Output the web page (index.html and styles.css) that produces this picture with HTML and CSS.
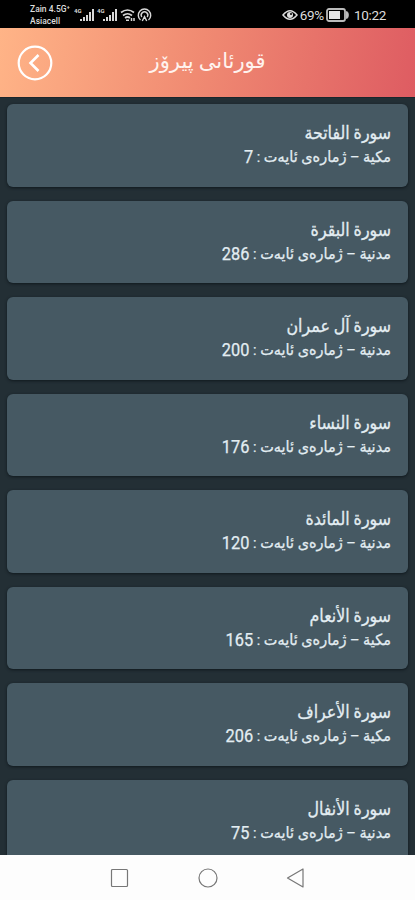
FILE: index.html
```
<!DOCTYPE html>
<html lang="ckb" dir="rtl">
<head>
  <meta charset="utf-8">
  <title>قورئانی پیرۆز</title>
  <link rel="stylesheet" href="styles.css">
</head>
<body>

<div class="status" dir="ltr">
  <div class="carrier"><span>Zain 4.5G⁺</span><span>Asiacell</span></div>
  <svg class="signals" width="80" height="16" viewBox="0 0 80 16">
    <g fill="#d8d8d8">
      <text x="0" y="6" class="net">4G</text>
      <path d="M6 14v-2h2v2zM9 14v-4h2v4zM12 14V8h2v6zM15 14V5h2v9zM18 14V2h2v12z"/>
      <text x="23" y="6" class="net">4G</text>
      <path d="M29 14v-2h2v2zM32 14v-4h2v4zM35 14V8h2v6zM38 14V5h2v9zM41 14V2h2v12z"/>
    </g>
    <g fill="none" stroke="#d8d8d8" stroke-width="1.7">
      <path d="M47 5.500q6.500-5 13 0M49 8.500q4.500-3.500 9 0M51 11q2.500-2 5 0"/>
      <path d="M52 13.200h3M57.500 11v3M60 11v3" stroke-width="1.500"/>
      <path d="M66.500 13a6.200 6.200 0 1 1 8 0M67.800 10a3.300 3.300 0 1 1 5.400 0M68.300 14l2.200-4.500 2.200 4.500" stroke-width="1.400"/>
    </g>
  </svg>
  <svg class="eye" width="16" height="12" viewBox="0 0 16 12">
    <path d="M1 6q7-8.500 14 0q-7 8.500-14 0z" fill="none" stroke="#ddd" stroke-width="1.500"/>
    <circle cx="8" cy="6" r="3" fill="#ddd"/>
    <circle cx="9" cy="5" r="1" fill="#000"/>
  </svg>
  <span class="percent">69%</span>
  <svg class="battery" width="24" height="14" viewBox="0 0 24 14">
    <rect x="1" y="1" width="18" height="12" rx="2" fill="none" stroke="#bbb" stroke-width="1.800"/>
    <rect x="3" y="3" width="11" height="8" fill="#e4e4e4"/>
    <path d="M20.500 3.500q1.800 0 1.800 3.500t-1.800 3.500z" fill="#bbb" stroke="#bbb"/>
  </svg>
  <span class="time">10:22</span>
</div>

<header class="header">
  <svg class="back" width="36" height="36" viewBox="0 0 36 36" fill="none" stroke="#fff">
    <circle cx="18" cy="18" r="16.300" stroke-width="2.200"/>
    <path d="M21.500 10L13.500 18l8 8" stroke-width="2.600"/>
  </svg>
  <h1>قورئانی پیرۆز</h1>
</header>

<main class="list">
  <div class="card">
    <h2>سورة الفاتحة</h2>
    <p>مكية – ژمارەی ئایەت : <b>7</b></p>
  </div>
  <div class="card">
    <h2>سورة البقرة</h2>
    <p>مدنية – ژمارەی ئایەت : <b>286</b></p>
  </div>
  <div class="card">
    <h2>سورة آل عمران</h2>
    <p>مدنية – ژمارەی ئایەت : <b>200</b></p>
  </div>
  <div class="card">
    <h2>سورة النساء</h2>
    <p>مدنية – ژمارەی ئایەت : <b>176</b></p>
  </div>
  <div class="card">
    <h2>سورة المائدة</h2>
    <p>مدنية – ژمارەی ئایەت : <b>120</b></p>
  </div>
  <div class="card">
    <h2>سورة الأنعام</h2>
    <p>مكية – ژمارەی ئایەت : <b>165</b></p>
  </div>
  <div class="card">
    <h2>سورة الأعراف</h2>
    <p>مكية – ژمارەی ئایەت : <b>206</b></p>
  </div>
  <div class="card">
    <h2>سورة الأنفال</h2>
    <p>مدنية – ژمارەی ئایەت : <b>75</b></p>
  </div>
</main>

<nav class="navbar" dir="ltr">
  <svg width="20" height="20" viewBox="0 0 20 20"><rect x="1.500" y="1.500" width="16" height="17" rx="1"/></svg>
  <svg width="20" height="20" viewBox="0 0 20 20"><circle cx="10" cy="10" r="9"/></svg>
  <svg width="20" height="20" viewBox="0 0 20 20"><path d="M17 1v18L1.500 10z" stroke-linejoin="round"/></svg>
</nav>

</body>
</html>
```
FILE: styles.css
```
* {
  margin: 0;
  padding: 0;
  box-sizing: border-box;
}
body {
  display: flex;
  flex-direction: column;
  height: 900px;
  overflow: hidden;
  background: #232f35;
  font-family: Roboto, "DejaVu Sans", sans-serif;
}
.status {
  display: flex;
  flex: none;
  align-items: center;
  height: 28px;
  padding: 1px 29px 0 30px;
  background: #000;
  color: #ddd;
}
.carrier {
  display: flex;
  flex-direction: column;
  width: 44px;
  font-size: 8.5px;
  font-weight: 500;
  line-height: 12px;
  white-space: nowrap;
}
.signals {
  flex: none;
}
.net {
  font-size: 6px;
  font-weight: bold;
}
.eye {
  margin-left: auto;
}
.percent {
  margin-left: 2px;
  font-size: 13.5px;
  letter-spacing: -0.3px;
}
.battery {
  margin: 0 4px 0 2px;
}
.time {
  font-size: 13.5px;
  letter-spacing: -0.3px;
}
.header {
  display: grid;
  flex: none;
  grid-template-columns: 1fr 1fr 1fr;
  align-items: center;
  height: 69px;
  padding: 0 17px;
  direction: ltr;
  background: linear-gradient(100deg, #ffb487, #f08a72 48%, #de5c62);
}
.header h1 {
  padding-bottom: 3px;
  color: #fff3ee;
  font-size: 21px;
  font-weight: normal;
  text-align: center;
  white-space: nowrap;
  direction: rtl;
}
.list {
  display: flex;
  flex: 1;
  flex-direction: column;
  gap: 14px;
  min-height: 0;
  overflow: hidden;
  padding: 6px 7px 0;
  border-top: 1px solid #1b262c;
}
.card {
  flex: none;
  height: 82.5px;
  padding: 16px 17px 0;
  border-radius: 6px;
  background: #465963;
  box-shadow: 0 1px 3px #10191e;
  color: #e3edf2;
}
.card h2 {
  font-size: 18px;
  font-weight: normal;
  line-height: 25px;
  transform: scaleX(0.88);
  transform-origin: right;
  -webkit-text-stroke: 0.3px;
}
.card p {
  font-size: 15.5px;
  line-height: 24px;
  transform: scaleX(0.935);
  transform-origin: right;
  -webkit-text-stroke: 0.25px;
}
.card b {
  font-size: 17.5px;
  font-weight: normal;
  vertical-align: -1px;
  line-height: 1;
}
.navbar {
  display: flex;
  flex: none;
  align-items: center;
  justify-content: center;
  gap: 68px;
  height: 45px;
  background: #fdfdfd;
}
.navbar svg {
  fill: none;
  stroke: #777;
  stroke-width: 1.2;
}
```
